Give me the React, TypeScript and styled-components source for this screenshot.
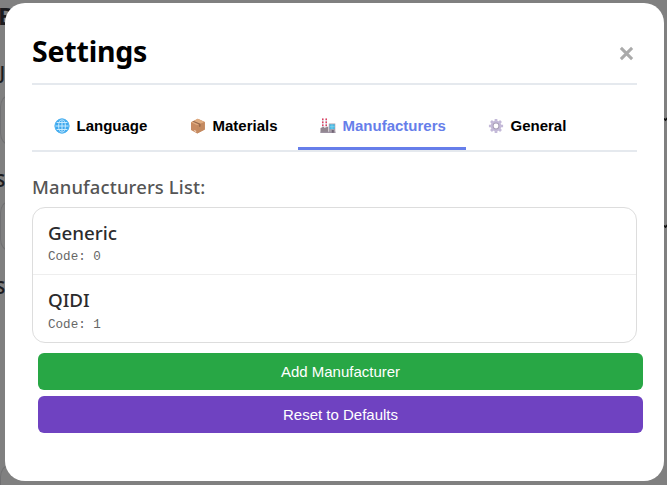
import React from "react";
import styled, { createGlobalStyle } from "styled-components";

const GlobalStyle = createGlobalStyle`
  * { box-sizing: border-box; }
  body { margin: 0; background: #808080; overflow: hidden; }
`;

const uiFont = `"Noto Sans", "Open Sans", sans-serif`;
const controlFont = `"Liberation Sans", Arial, sans-serif`;

const Backdrop = styled.div`
  display: grid;
  grid-template-columns: 5px 659px 3px;
  width: 667px;
  height: 485px;
  background: #808080;
  overflow: hidden;
`;

const PageEdge = styled.div<{ $right?: boolean }>`
  display: flex;
  flex-direction: column;
  align-items: ${(p) => (p.$right ? "flex-start" : "flex-end")};
  height: 485px;
  overflow: visible;
`;

const PageText = styled.span<{ $gap: number; $size: number; $start?: boolean }>`
  align-self: ${(p) => (p.$start ? "flex-start" : "flex-end")};
  margin: ${(p) => p.$gap}px 0 0 ${(p) => (p.$start ? -2 : 0)}px;
  font: ${(p) => (p.$start ? 700 : 600)} ${(p) => p.$size}px/20px ${uiFont};
  color: #1c1c1f;
`;

const PageField = styled.span<{ $gap: number }>`
  flex: none;
  width: 9px;
  height: 50px;
  margin-top: ${(p) => p.$gap}px;
  margin-right: -4px;
  border: solid #707072;
  border-width: 1px 0 1px 1px;
  border-radius: 9px 0 0 9px / 12px 0 0 12px;
`;

const PageChevron = styled.svg<{ $gap: number }>`
  flex: none;
  margin-top: ${(p) => p.$gap}px;
`;

const Modal = styled.main`
  z-index: 1;
  height: 478px;
  margin-top: 3px;
  padding: 27px;
  background: #fff;
  border-radius: 20px;
  font-family: ${uiFont};
`;

const Header = styled.header`
  display: flex;
  justify-content: space-between;
  align-items: center;
  height: 55px;
  padding-bottom: 12px;
  border-bottom: 2px solid #e5e9ee;
`;

const Title = styled.h1`
  margin: 0;
  font-size: 28.5px;
  line-height: 40px;
  font-weight: 700;
  letter-spacing: -0.2px;
  color: #000;
`;

const CloseButton = styled.button`
  display: flex;
  align-items: center;
  padding: 5px 3px 0 0;
  border: 0;
  background: none;
`;

const Tabs = styled.nav`
  display: flex;
  height: 51px;
  margin-top: 16px;
  border-bottom: 2px solid #e5e9ee;
`;

const Tab = styled.button<{ $active?: boolean; $width: number }>`
  display: flex;
  align-items: center;
  gap: 6.5px;
  width: ${(p) => p.$width}px;
  height: 49px;
  padding: 3px 0 0 22px;
  border: 0;
  border-bottom: 3px solid ${(p) => (p.$active ? "#667eea" : "transparent")};
  background: none;
  color: ${(p) => (p.$active ? "#667eea" : "#000")};
  font: 700 15px/18px ${controlFont};
  white-space: nowrap;

  svg { flex: none; }
`;

const SectionTitle = styled.h2`
  margin: 22px 0 7px;
  font-size: 18.4px;
  line-height: 26px;
  font-weight: 550;
  letter-spacing: 0.16px;
  color: #555;
`;

const List = styled.ul`
  display: grid;
  grid-template-rows: 67px 67px;
  height: 136px;
  margin: 0;
  padding: 0;
  list-style: none;
  border: 1px solid #ddd;
  border-radius: 13px;
`;

const Item = styled.li`
  padding: 12px 15px 0;

  &:first-child { border-bottom: 1px solid #eee; }
`;

const ItemName = styled.div`
  font-size: 18.8px;
  line-height: 26px;
  font-weight: 550;
  letter-spacing: -0.05px;
  color: #2b2b2d;
`;

const ItemCode = styled.div`
  margin-top: 3px;
  font: 12.6px/16px "Liberation Mono", monospace;
  color: #666;

  ${Item}:last-child & { margin-top: 4px; }
`;

const Actions = styled.div`
  display: grid;
  gap: 6px;
  margin: 10px -6px 0 6px;
`;

const ActionButton = styled.button<{ $color: string }>`
  height: 37px;
  padding: 0;
  border: 0;
  border-radius: 6px;
  background: ${(p) => p.$color};
  color: #fff;
  font: 15px/18px ${controlFont};
`;

const Globe = () => (
  <svg width="16" height="16" viewBox="0 0 16 16">
    <circle cx="8" cy="8" r="7.4" fill="#3fa9ee" />
    <g fill="none" stroke="#c6eaff" strokeWidth="1">
      <ellipse cx="8" cy="8" rx="3.4" ry="6.6" />
      <path d="M8 1v14M1 8h14M2.4 4.5h11.2M2.4 11.5h11.2" />
    </g>
    <circle cx="8" cy="8" r="7" fill="none" stroke="#55b6f2" />
  </svg>
);

const Package = () => (
  <svg width="16" height="16" viewBox="0 0 16 16">
    <path d="M1 4.2 7.8.8 14.8 4v7.6L7.2 15.4 1 12z" fill="#c88b62" />
    <path d="M1 4.2 7.8.8 14.8 4 7.2 7.3z" fill="#e0ac80" />
    <path d="M7.2 7.3 14.8 4v7.6l-7.6 3.8z" fill="#c48a60" />
    <path d="M3.8 2.9 10.5 5.8v2.7l-1.4.6V6.5L2.4 3.6z" fill="#94664b" />
    <path d="m4.3 12 1.8.9v1l-1.8-.9z" fill="#fff0df" />
  </svg>
);

const Factory = () => (
  <svg width="16" height="16" viewBox="0 0 16 16">
    <path d="M2 .5h1.5V10H2zM5.5.5H7V10H5.5z" fill="#d8d0d8" />
    <path d="M2 .5h1.5V2H2zM2 3.5h1.5V5H2zM2 6.5h1.5V8H2zM5.5.5H7V2H5.5zM5.5 3.5H7V5H5.5zM5.5 6.5H7V8H5.5z" fill="#df3e61" />
    <path d="M.5 10 4.3 8.5V10l4-1.5v6.2H.5z" fill="#91868f" />
    <path d="M8.8 5.5h6.5v9.2H8.8z" fill="#aaa0aa" />
    <path d="M9.7 6.3h5v4.8h-5z" fill="#45bce8" />
    <path d="M12 6.3v4.8M9.7 8.7h5" stroke="#a7dced" strokeWidth=".5" />
    <path d="M.5 13.7h15v1.2H.5z" fill="#9b90a0" />
    <path d="M11.8 12h2v2.7h-2z" fill="#716475" />
  </svg>
);

const Gear = () => (
  <svg width="16" height="16" viewBox="0 0 16 16">
    <g stroke="#c3b9d8" strokeWidth="2.7">
      <path d="M8 .9v14.2M.9 8h14.2M3 3l10 10M13 3 3 13" />
    </g>
    <circle cx="8" cy="8" r="5.4" fill="#c5bbd9" />
    <circle cx="8" cy="8" r="3.4" fill="#a99fb8" />
    <circle cx="8" cy="8" r="2.4" fill="#fff" />
  </svg>
);

const tabs = [
  { label: "Language", width: 136, Icon: Globe },
  { label: "Materials", width: 130, Icon: Package },
  { label: "Manufacturers", width: 168, Icon: Factory, active: true },
  { label: "General", width: 123, Icon: Gear },
];

const manufacturers = [
  { name: "Generic", code: 0 },
  { name: "QIDI", code: 1 },
];

const Chevron = ({ gap }: { gap: number }) => (
  <PageChevron $gap={gap} width="7" height="7" viewBox="0 0 7 7">
    <path d="M0 3.5 1.5 5 5 1.5" fill="none" stroke="#111" strokeWidth="1.7" />
  </PageChevron>
);

export default function App() {
  return (
    <Backdrop>
      <GlobalStyle />
      <PageEdge>
        <PageText $gap={6} $size={24} $start>B</PageText>
        <PageText $gap={37} $size={17}>J</PageText>
        <PageField $gap={12} />
        <PageText $gap={26} $size={17}>S</PageText>
        <PageField $gap={10} />
        <PageText $gap={27} $size={17}>S</PageText>
        <PageField $gap={167} />
      </PageEdge>
      <Modal>
        <Header>
          <Title>Settings</Title>
          <CloseButton aria-label="Close">
            <svg width="15" height="15" viewBox="0 0 15 15">
              <path d="m1.9 1.9 11.2 11.2M13.1 1.9 1.9 13.1" stroke="#aaa" strokeWidth="3" />
            </svg>
          </CloseButton>
        </Header>
        <Tabs>
          {tabs.map(({ label, width, Icon, active }) => (
            <Tab key={label} $width={width} $active={active}>
              <Icon />
              {label}
            </Tab>
          ))}
        </Tabs>
        <SectionTitle>Manufacturers List:</SectionTitle>
        <List>
          {manufacturers.map(({ name, code }) => (
            <Item key={name}>
              <ItemName>{name}</ItemName>
              <ItemCode>Code: {code}</ItemCode>
            </Item>
          ))}
        </List>
        <Actions>
          <ActionButton $color="#28a745">Add Manufacturer</ActionButton>
          <ActionButton $color="#6f42c1">Reset to Defaults</ActionButton>
        </Actions>
      </Modal>
      <PageEdge $right>
        <Chevron gap={115} />
        <Chevron gap={100} />
      </PageEdge>
    </Backdrop>
  );
}
